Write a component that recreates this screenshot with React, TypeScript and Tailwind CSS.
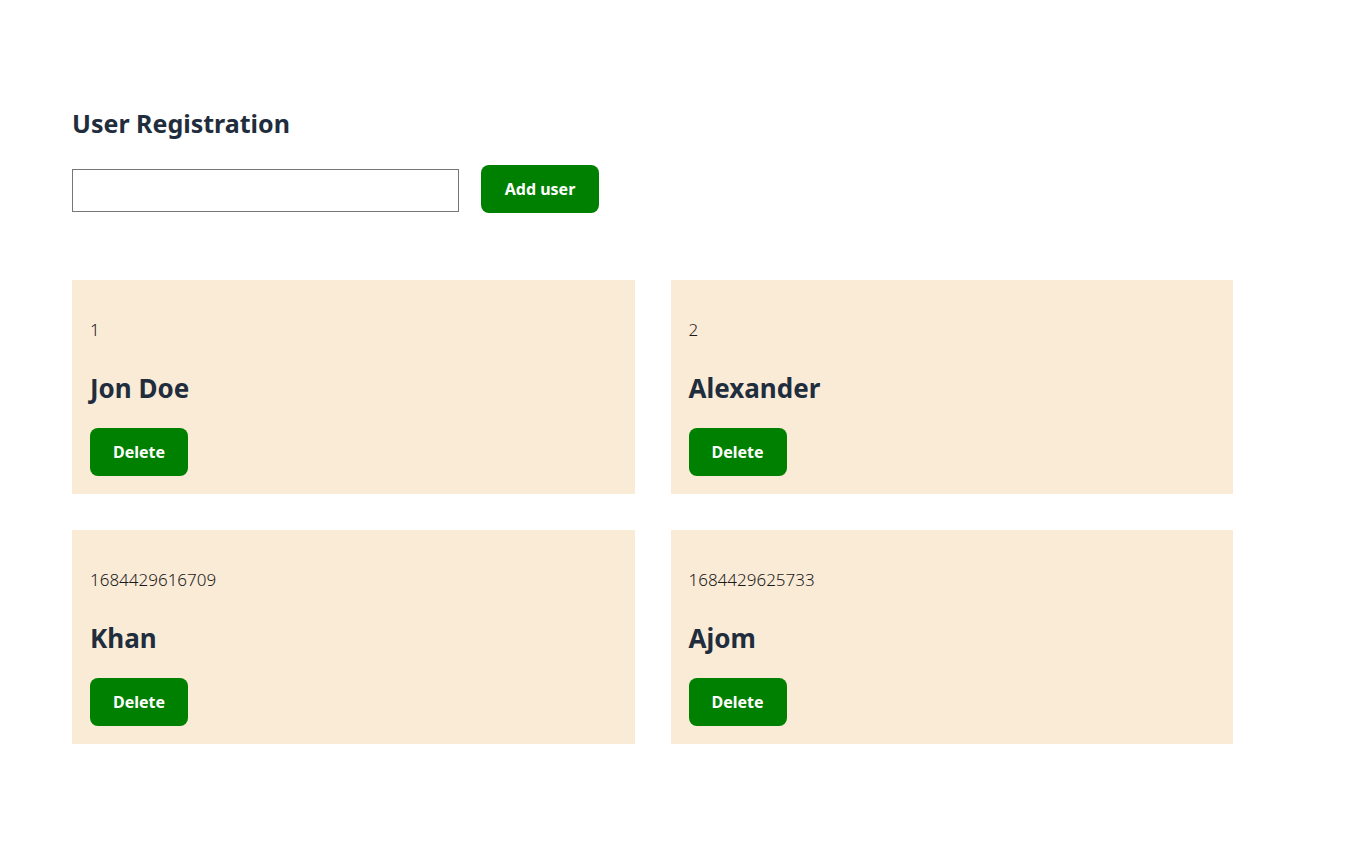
import { useState } from "react";

type User = { id: number; name: string };

const INITIAL_USERS: User[] = [
  { id: 1, name: "Jon Doe" },
  { id: 2, name: "Alexander" },
  { id: 1684429616709, name: "Khan" },
  { id: 1684429625733, name: "Ajom" },
];

export default function App() {
  const [users, setUsers] = useState<User[]>(INITIAL_USERS);
  const [name, setName] = useState("");

  const addUser = () => {
    if (!name.trim()) return;
    setUsers((prev) => [...prev, { id: Date.now(), name: name.trim() }]);
    setName("");
  };

  const deleteUser = (id: number) => {
    setUsers((prev) => prev.filter((u) => u.id !== id));
  };

  return (
    <div className="min-h-screen bg-white pl-[72px] pt-[105px] font-['Noto_Sans',sans-serif] text-[#1f2d3d]">
      <h1 className="text-[25px] font-bold leading-[36px]">User Registration</h1>

      {/* Form */}
      <div className="mt-[24px] flex items-end gap-[22px]">
        <input
          value={name}
          onChange={(e) => setName(e.target.value)}
          className="mb-[1px] h-[43px] w-[387px] border border-[#767676] bg-white px-2 text-base outline-none"
        />
        <button
          onClick={addUser}
          className="h-[48px] w-[118px] rounded-lg bg-[#008000] text-base font-bold text-white"
        >
          Add user
        </button>
      </div>

      {/* User cards */}
      <div className="mt-[67px] grid w-[1161px] grid-cols-2 gap-9">
        {users.map((user) => (
          <div key={user.id} className="bg-[#faebd7] px-[18px] pb-[18px] pt-[38px]">
            <p className="text-[17px] font-light leading-6 text-[#1a1a1a]">{user.id}</p>
            <h2 className="mt-[30px] text-[26px] font-bold leading-8">{user.name}</h2>
            <button
              onClick={() => deleteUser(user.id)}
              className="mt-[24px] h-[48px] w-[98px] rounded-lg bg-[#008000] text-base font-bold text-white"
            >
              Delete
            </button>
          </div>
        ))}
      </div>
    </div>
  );
}
